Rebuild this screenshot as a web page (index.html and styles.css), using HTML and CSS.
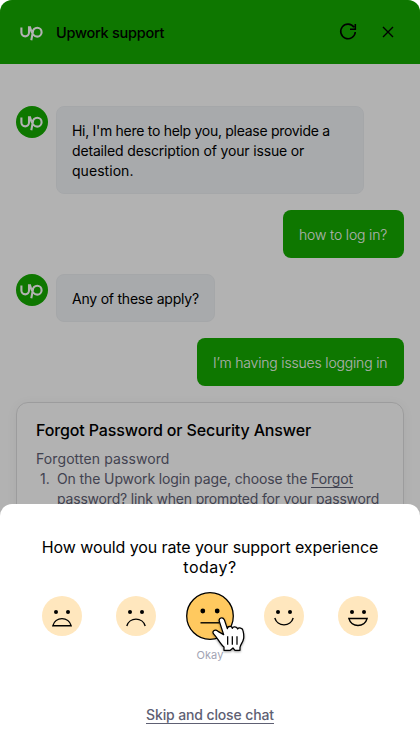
FILE: index.html
```
<!DOCTYPE html>
<html lang="en">
<head>
<meta charset="utf-8">
<title>Upwork support</title>
<link rel="stylesheet" href="styles.css">
</head>
<body>
<svg width="0" height="0" class="defs">
  <symbol id="up" viewBox="0 0 32 32">
    <path d="M6 11.2v5.2a3.8 3.8 0 0 0 7.6 0v-5.2h1.1c1 3.8 2.9 9.2 7.1 9.2a4.4 4.4 0 1 0-4.4-4.4L15.9 24" transform="translate(-.6 .2)" fill="none" stroke="currentColor" stroke-width="2.1"/>
  </symbol>
</svg>
<div class="app">
  <header class="header">
    <svg class="logo"><use href="#up"/></svg>
    <h1 class="title">Upwork support</h1>
    <svg class="reload" viewBox="0 0 24 24"><path d="M18 7.2A7.3 7.3 0 1 0 19.3 12M19.3 4v5.3H14" /></svg>
    <svg class="close" viewBox="0 0 24 24"><path d="M7 7l10 10M17 7L7 17"/></svg>
  </header>
  <main class="chat">
    <div class="row">
      <svg class="avatar"><use href="#up"/></svg>
      <p class="bubble wide"><span class="l1">Hi, I'm here to help you, please provide a</span><br><span class="l2">detailed description of your issue or</span><br><span class="l3">question.</span></p>
    </div>
    <p class="reply r1">how to log in?</p>
    <div class="row">
      <svg class="avatar"><use href="#up"/></svg>
      <p class="bubble narrow">Any of these apply?</p>
    </div>
    <p class="reply r2">I’m having issues logging in</p>
    <article class="card">
      <h2>Forgot Password or Security Answer</h2>
      <p class="sub">Forgotten password</p>
      <div class="step"><span class="num">1.</span><p><span class="s1">On the Upwork login page, choose the <u>Forgot</u></span><br><span class="s2">password? link when prompted for your password</span></p></div>
    </article>
  </main>
  <div class="overlay"></div>
  <section class="sheet">
    <h2 class="question"><span class="q1">How would you rate your support experience</span><br><span class="q2">today?</span></h2>
    <div class="faces">
      <svg class="face" viewBox="0 0 40 40"><circle cx="20" cy="20" r="20"/><g class="eyes"><circle cx="14" cy="16" r="2"/><circle cx="26" cy="16" r="2"/></g><path d="M10.9 29.7a9.4 9.4 0 0 1 18.2 0z"/></svg>
      <svg class="face" viewBox="0 0 40 40"><circle cx="20" cy="20" r="20"/><g class="eyes"><circle cx="14" cy="16" r="2"/><circle cx="26" cy="16" r="2"/></g><path d="M10.8 30a9.6 9.6 0 0 1 18.4 0"/></svg>
      <div class="selected">
        <svg class="face active" viewBox="0 0 48 48"><circle class="disc" cx="24" cy="24" r="23.3"/><g class="eyes"><circle cx="16.8" cy="19" r="2.4"/><circle cx="31.2" cy="19" r="2.4"/></g><path d="M14.5 30.8h19"/></svg>
        <span class="label">Okay</span>
        <svg class="hand" viewBox="108 92 104 108"><path d="M146 148 133 108c-3-10 10-15 15-5l9 27c0-8 13-9 15-1 1-6 14-6 16 2 3-5 15-4 16 5 2 8 3 15 2 23-2 13-10 18-11 27v9h-15l-6-7-8 7h-19v-10c-12-9-18-26-30-38-9-9 3-17 12-9z"/><path d="M158 153v25M172 153v25M186 153v25"/></svg>
      </div>
      <svg class="face" viewBox="0 0 40 40"><circle cx="20" cy="20" r="20"/><g class="eyes"><circle cx="14" cy="16" r="2"/><circle cx="26" cy="16" r="2"/></g><path d="M10.8 22a9.6 9.6 0 0 0 18.4 0"/></svg>
      <svg class="face" viewBox="0 0 40 40"><circle cx="20" cy="20" r="20"/><g class="eyes"><circle cx="14" cy="16" r="2"/><circle cx="26" cy="16" r="2"/></g><path d="M10.9 22.5a9.4 9.4 0 0 0 18.2 0z"/></svg>
    </div>
    <a class="skip">Skip and close chat</a>
  </section>
</div>
</body>
</html>
```
FILE: styles.css
```
* { box-sizing: border-box; margin: 0; padding: 0; }
body { background: #fff; font-family: Inter, "Liberation Sans", sans-serif; font-size: 14px; line-height: 20px; color: #000; }
.defs { position: absolute; }
.app { position: relative; width: 420px; height: 750px; overflow: hidden; border-radius: 12px 12px 0 0; background: #fff; }
.header { height: 64px; background: #15ab00; display: flex; align-items: center; padding: 0 20px 0 16px; }
.logo { width: 32px; height: 32px; color: #fff; margin-right: 8px; }
.title { font-size: 14.5px; font-weight: 450; letter-spacing: -.26px; flex: 1; padding-top: 2px; white-space: nowrap; }
.reload, .close { width: 24px; height: 24px; fill: none; stroke: #000; stroke-width: 1.6; }
.close { margin-left: 16px; stroke-width: 1.4; }
.chat { padding: 42px 16px 0; display: flex; flex-direction: column; white-space: nowrap; }
.row { display: flex; gap: 8px; margin-bottom: 16px; }
.avatar { width: 32px; height: 32px; border-radius: 50%; background: #15ab00; color: #fff; }
.bubble { background: #f1f4f7; border: 1px solid #edf0f3; border-radius: 8px; padding: 14px 15px; height: 48px; }
.wide { width: 308px; height: 88px; }
.narrow { width: 159px; letter-spacing: -.22px; }
.l1 { letter-spacing: -.29px; }
.l2 { letter-spacing: -.16px; }
.l3 { letter-spacing: .05px; }
.reply { align-self: flex-end; height: 48px; padding: 15px 16px; border-radius: 8px; background: #15ab00; color: #fff; margin-bottom: 16px; font-weight: 300; }
.r1 { width: 121px; letter-spacing: -.16px; }
.r2 { width: 207px; letter-spacing: -.18px; }
.card { height: 160px; border: 1px solid #e0e0e1; border-radius: 12px; padding: 17px 19px; box-shadow: 0 2px 12px rgba(0,0,0,.05); color: #5e6073; }
.card h2 { font-size: 16px; font-weight: 500; line-height: 20px; color: #000; letter-spacing: -.13px; }
.sub { margin-top: 9px; letter-spacing: .1px; }
.step { display: flex; }
.num { width: 21px; padding-left: 4px; flex: none; }
.s1 { letter-spacing: -.11px; }
.s2 { letter-spacing: -.19px; }
.card u { text-decoration-thickness: 1px; text-underline-offset: 3px; }
.overlay { position: absolute; inset: 0; background: rgba(0,0,0,.3); }
.sheet { position: absolute; left: 0; right: 0; bottom: 0; height: 246px; background: #fff; border-radius: 12px 12px 0 0; padding-top: 33px; text-align: center; white-space: nowrap; }
.question { font-size: 16px; font-weight: 400; line-height: 20px; }
.q1 { letter-spacing: -.1px; }
.q2 { letter-spacing: .5px; }
.faces { display: flex; justify-content: space-between; padding: 0 42px; margin-top: 19px; }
.face { width: 40px; height: 40px; fill: #ffe7be; }
.face path { fill: none; stroke: #000; stroke-width: 1.4; }
.face .eyes { fill: #000; }
.selected { position: relative; width: 48px; height: 40px; margin: 0 -4px; display: flex; flex-direction: column; align-items: center; }
.active { width: 48px; height: 48px; margin-top: -4px; flex: none; }
.disc { fill: #ffc95f; stroke: #000; stroke-width: 1.3; }
.label { font-size: 11px; line-height: 14px; color: #a2a4b3; margin-top: 8px; letter-spacing: .1px; }
.hand { position: absolute; left: 24.5px; top: 19.5px; width: 34.67px; height: 36px; overflow: visible; fill: #fff; stroke: #000; stroke-width: 3.8; stroke-linejoin: round; filter: drop-shadow(0 1px 1px rgba(0,0,0,.4)); }
.skip { display: inline-block; margin-top: 70px; color: #5e6073; font-weight: 500; letter-spacing: -.13px; border-bottom: 1px solid #5e6073; line-height: 17px; }
```
